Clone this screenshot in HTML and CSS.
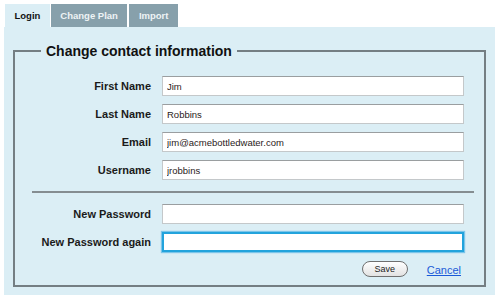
FILE: index.html
```html
<!DOCTYPE html>
<html lang="en">
<head>
    <meta charset="UTF-8">
    <title>Account</title>
    <link rel="stylesheet" href="styles.css">
</head>
<body>
    <div class="tabs">
        <a class="tab active" href="#">Login</a>
        <a class="tab" href="#">Change Plan</a>
        <a class="tab" href="#">Import</a>
    </div>

    <div class="panel">
        <fieldset class="contact">
            <legend>Change contact information</legend>
            <div class="form-grid">
                <label for="first">First Name</label>
                <input type="text" id="first" value="Jim">

                <label for="last">Last Name</label>
                <input type="text" id="last" value="Robbins">

                <label for="email">Email</label>
                <input type="text" id="email" value="jim@acmebottledwater.com">

                <label for="user">Username</label>
                <input type="text" id="user" value="jrobbins">

                <div class="sep"></div>

                <label for="pw">New Password</label>
                <input type="password" id="pw">

                <label for="pw2">New Password again</label>
                <input type="password" id="pw2" class="focused">

                <div></div>
                <div class="actions">
                    <button type="button">Save</button>
                    <a href="#" class="cancel">Cancel</a>
                </div>
            </div>
        </fieldset>
    </div>
</body>
</html>
```

FILE: styles.css
```css
body {
    margin: 0;
    font-family: "Liberation Sans", Arial, sans-serif;
    background-color: #fff;
    color: #1a1a1a;
}
.tabs {
    display: flex;
    margin-top: 4px;
    padding-left: 5px;
    height: 23px;
}
.tab {
    display: block;
    padding: 0 9.5px;
    margin-right: 2px;
    line-height: 23px;
    font-size: 9.5px;
    font-weight: bold;
    text-decoration: none;
    background-color: #87a0ab;
    color: #eef3f5;
}
.tab.active {
    background-color: #dbeef5;
    color: #111;
    margin-right: 1px;
}
.panel {
    width: 491px;
    margin-left: 4px;
    box-sizing: border-box;
    padding: 15px 9px 8px 9px;
    background-color: #dbeef5;
}
.contact {
    margin: 0;
    padding: 0 0 8px 0;
    border: 2px solid #747e83;
}
.contact legend {
    margin-left: 26px;
    padding: 0 5px;
    font-size: 14px;
    line-height: 18px;
    font-weight: bold;
    color: #111;
}
.form-grid {
    display: grid;
    grid-template-columns: 136px 302px;
    column-gap: 11px;
    row-gap: 8px;
    align-items: center;
    padding-top: 16px;
}
.form-grid label {
    text-align: right;
    font-size: 11px;
    font-weight: bold;
    color: #1a1a1a;
}
.form-grid input {
    box-sizing: border-box;
    height: 20px;
    margin: 0;
    padding: 0 4px;
    font-family: "Liberation Sans", Arial, sans-serif;
    font-size: 9.5px;
    color: #2a1a1a;
    background: #fff;
    border: 1px solid #c4c8ca;
    border-top-color: #9a9ea0;
    outline: none;
}
.form-grid input.focused {
    border: 2px solid #22a3dc;
    box-shadow: 0 0 1px 1px rgba(60, 170, 225, 0.6);
}
.sep {
    grid-column: 1 / -1;
    height: 2px;
    margin: 3px -10px 3px 17px;
    background-color: #858d91;
}
.actions {
    display: flex;
    justify-content: flex-end;
    align-items: center;
    gap: 19px;
    padding-right: 3px;
    margin-top: 1px;
}
.actions button {
    box-sizing: border-box;
    width: 46px;
    height: 16px;
    padding: 0;
    font-family: "Liberation Sans", Arial, sans-serif;
    font-size: 9px;
    color: #222;
    border: 1px solid #6f6f6f;
    border-radius: 8px;
    background: linear-gradient(#ffffff, #e2e2e2);
    cursor: pointer;
}
.cancel {
    font-size: 11px;
    color: #1a5ad8;
    text-decoration: underline;
    margin-top: 2px;
}
```
